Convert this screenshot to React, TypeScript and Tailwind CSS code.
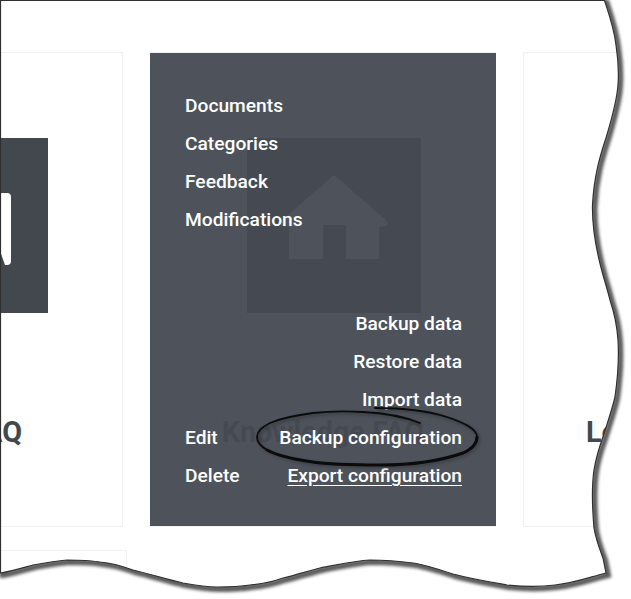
import React from 'react';

const tornEdge =
  'M0.5 0.5 L604.5 0.5 C609 14 614 28 616 45 C618 58 619 72 618 85 C617 100 612 118 606 138 C600 156 594 176 592.5 205 C592 226 596 250 603 275 C606 285 608 292 610 300 C614 312 617 324 618 340 C619 356 618 376 615 397 C612 410 607 424 603 437 C599 448 596 458 594 470 C592 484 592 505 594 528 C596 540 600 550 603 558 C604 563 605 568 606 573 C590 577 575 583 555 585 C540 587 525 587 507 585 C490 582 472 579 453 574 C438 569 426 565 413 563 C398 561 385 560 370 560 C353 561 337 565 320 568 C308 571 296 575 283 578 C272 582 262 584 250 585 C238 587 228 587 217 587 C205 587 194 585 183 583 C166 579 150 574 133 570 C122 566 112 563 100 562 C88 560 78 560 67 560 C55 561 44 563 33 565 C22 568 12 571 1 573 L0.5 573 Z';

const circled =
  'M375 408 C400 408 428 411 447 417 C465 423 477 429 477 437 C477 444 472 449 463 453 C440 461 410 465 380 465 C355 465 332 465 313 462 C292 459 276 455 267 450 C260 446 257 442 257 437 C257 431 262 427 270 423 C282 418 297 415 313 413 C330 411 347 411 363 412 C385 413 405 417 420 423';

// the pen presses harder along the bottom of the ring
const circledBottom = 'M477 437 C477 444 472 449 463 453 C440 461 410 465 380 465 C355 465 332 465 313 462 C292 459 276 455 267 450';

const MenuLink = ({ label, underline }: { label: string; underline?: boolean }) => (
  <a className={`block leading-[38px] ${underline ? 'underline underline-offset-[3px]' : ''}`}>{label}</a>
);

export default function App() {
  return (
    <div className="relative h-[599px] w-[631px] overflow-hidden bg-white font-['Roboto',sans-serif]">
      <div className="flex flex-col gap-[23px] pt-[52px]">
        <div className="flex gap-[27px]">
          {/* FAQ card, mostly cut off on the left */}
          <div className="ml-[-223px] flex h-[475px] w-[346px] shrink-0 flex-col border border-[#f1f1f1] pl-[96px]">
            <div className="mt-[85px] h-[175px] w-[174px] bg-[#43484f]">
              <svg viewBox="0 0 174 175" className="h-full w-full">
                <rect x="37" y="55" width="100" height="72" rx="4" fill="#fff" />
                <path d="M125 110 L131 127 L127 127 Z" fill="#43484f" />
              </svg>
            </div>
            <div className="mt-[101px] pr-[100px] text-right text-[28.8px] leading-[36px] font-bold text-[#43484f]">FAQ</div>
          </div>

          {/* Card with its hover menu open */}
          <div className="relative flex h-[475px] w-[346px] shrink-0 flex-col border border-[#f1f1f1] pl-[96px]">
            <div className="mt-[85px] h-[175px] w-[174px] bg-[#43484f]">
              <svg viewBox="0 0 174 175" className="h-full w-full">
                <path
                  d="M87 37 L140 83 Q142 86 139 88 L132 89 L132 121 L99 121 L99 87 L76 87 L76 121 L42 121 L42 89 L35 88 Q32 86 34 83 Z"
                  fill="#fff"
                />
              </svg>
            </div>
            <div className="mt-[101px] ml-[-96px] text-center text-[28.8px] leading-[36px] font-bold text-[#43484f]">
              Knowledge FAQ
            </div>

            <div className="absolute inset-y-0 -inset-x-px flex flex-col justify-between bg-[#444a52]/95 pt-[34px] pr-[34px] pb-[31px] pl-[35px] text-[19.2px] font-medium text-white">
              <div>
                <MenuLink label="Documents" />
                <MenuLink label="Categories" />
                <MenuLink label="Feedback" />
                <MenuLink label="Modifications" />
              </div>
              <div className="flex items-end justify-between">
                <div>
                  <MenuLink label="Edit" />
                  <MenuLink label="Delete" />
                </div>
                <div className="text-right">
                  <MenuLink label="Backup data" />
                  <MenuLink label="Restore data" />
                  <MenuLink label="Import data" />
                  <MenuLink label="Backup configuration" />
                  <MenuLink label="Export configuration" underline />
                </div>
              </div>
            </div>
          </div>

          {/* Next card, cut off by the torn edge */}
          <div className="flex h-[475px] w-[346px] shrink-0 flex-col border border-[#f1f1f1] pl-[62px]">
            <div className="mt-[361px] text-[28.8px] leading-[36px] font-bold text-[#43484f]">Le</div>
          </div>
        </div>

        {/* Top of the second row */}
        <div className="ml-[-223px] h-[60px] w-[350px] border border-[#f1f1f1]" />
      </div>

      {/* Hand drawn ring and torn paper edge */}
      <svg viewBox="0 0 631 599" className="absolute inset-0 h-[599px] w-[631px]" fill="none">
        <defs>
          <filter id="soft" x="-10%" y="-10%" width="120%" height="120%">
            <feGaussianBlur stdDeviation="1.4" />
          </filter>
          <clipPath id="outside">
            <path clipRule="evenodd" d={`M0 0 H631 V599 H0 Z ${tornEdge}`} />
          </clipPath>
        </defs>

        <path d={circled} stroke="#2b2e33" strokeWidth="3" opacity="0.5" transform="translate(2 2)" filter="url(#soft)" />
        <path d={circled} stroke="#0b0b0b" strokeWidth="1.8" strokeLinecap="round" />
        <path d={circledBottom} stroke="#0b0b0b" strokeWidth="3" strokeLinecap="round" />

        <path fillRule="evenodd" fill="#fff" d={`M0 0 H631 V599 H0 Z ${tornEdge}`} />
        <g clipPath="url(#outside)">
          <path d={tornEdge} stroke="#333" strokeWidth="6" opacity="0.8" transform="translate(2 2)" filter="url(#soft)" />
        </g>
        <path d={tornEdge} stroke="#2f2f2f" strokeWidth="1.2" />
      </svg>
    </div>
  );
}
